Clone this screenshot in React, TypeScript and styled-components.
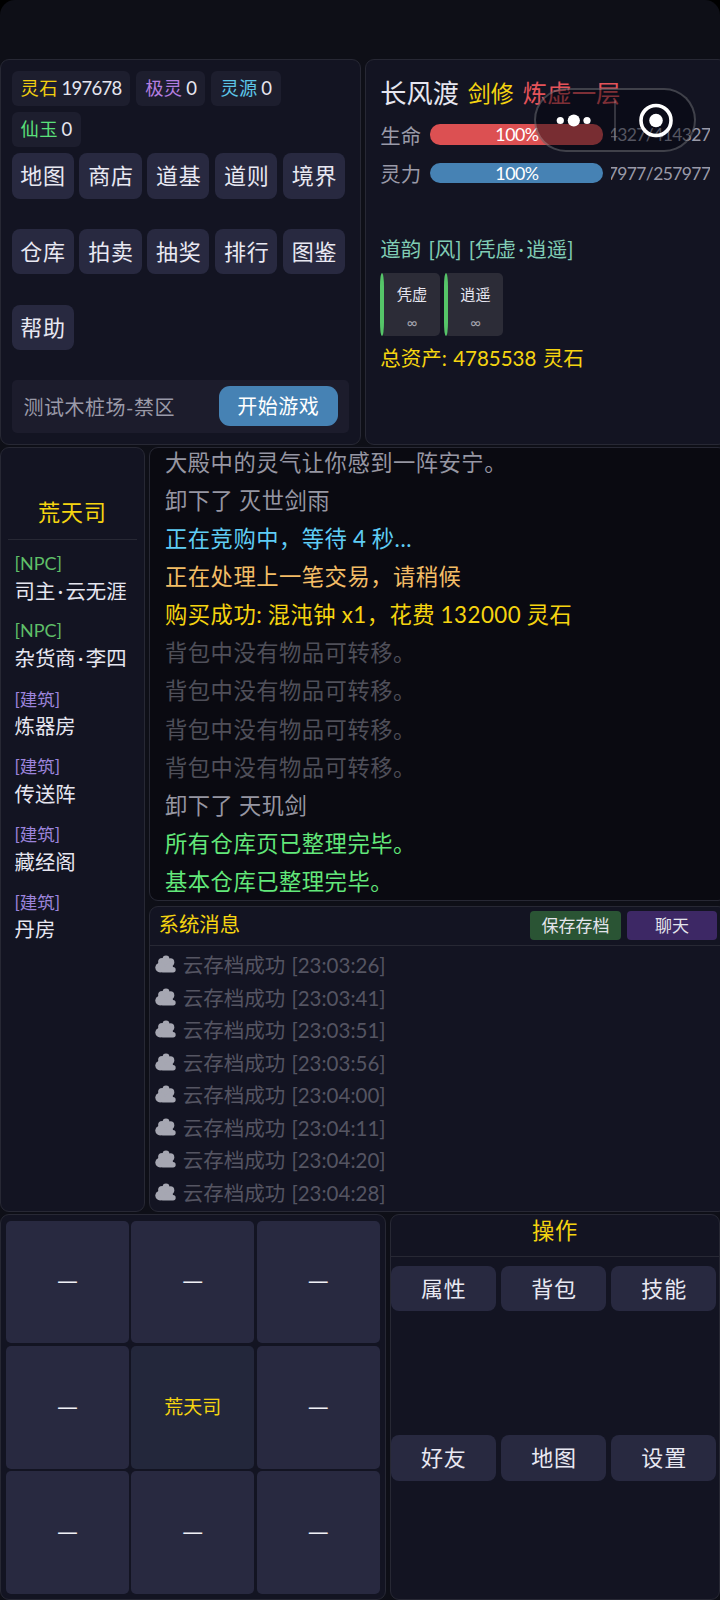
import React from "react";
import styled, { createGlobalStyle } from "styled-components";

const Global = createGlobalStyle`
  *, *::before, *::after { box-sizing: border-box; }
  body { margin: 0; background: #000; }
  button { font: inherit; border: 0; padding: 0; }
`;

const line = "#272834";
const gold = "#f5d410";

const Screen = styled.div`
  position: relative;
  width: 720px;
  height: 1600px;
  overflow: hidden;
  padding-top: 59px;
  display: flex;
  flex-direction: column;
  gap: 2px;
  border-radius: 15px 15px 0 0;
  background: #0e0f17;
  color: #e6e6f0;
  font-family: Lato, "Noto Sans CJK SC", sans-serif;
  font-size: 22.8px;
  font-weight: 400;
  white-space: nowrap;
`;

const Row = styled.div<{ $h: number; $gap: number }>`
  display: flex;
  flex: none;
  height: ${(p) => p.$h}px;
  gap: ${(p) => p.$gap}px;
`;

const Panel = styled.section<{ $w?: number; $h?: number; $dark?: boolean }>`
  flex: none;
  display: flex;
  flex-direction: column;
  ${(p) => p.$w && `width: ${p.$w}px;`}
  ${(p) => p.$h && `height: ${p.$h}px;`}
  border: 1px solid ${line};
  border-radius: 9px;
  background: ${(p) => (p.$dark ? "#0a0a11" : "#131422")};
  overflow: hidden;
`;

const MenuPanel = styled(Panel)`
  padding: 11px 10.5px;
`;

const Chips = styled.div`
  display: grid;
  grid-template-columns: 118.5px 69px 70px;
  gap: 5.7px 6.2px;
`;

const Chip = styled.div`
  width: 100%;
  height: 35.3px;
  padding-left: 9px;
  border-radius: 6px;
  background: #1d1e2e;
  display: flex;
  align-items: center;
  gap: 3.6px;
  font-size: 18.3px;
  letter-spacing: 0.4px;
  line-height: 35px;

  &:nth-child(4) {
    width: 69px;
  }
`;

const ChipName = styled.span<{ $c: string }>`
  color: ${(p) => p.$c};
`;

const ChipNum = styled.span`
  font-size: 18.5px;
  letter-spacing: -0.7px;
`;

const MenuGrid = styled.div`
  display: grid;
  grid-template-columns: repeat(5, 62.2px);
  grid-auto-rows: 45.3px;
  gap: 30.4px 5.7px;
  margin-top: 6px;
`;

const MenuButton = styled.button`
  padding-left: 1px;
  border-radius: 8px;
  background: #282940;
  color: #e8e8f2;
  font-size: 22px;
  letter-spacing: 0.8px;
  line-height: 43px;
  text-align: center;
`;

const StartBar = styled.div`
  margin-top: 29.8px;
  width: 337.5px;
  height: 54px;
  padding: 0 11.5px 0 12px;
  display: flex;
  align-items: center;
  justify-content: space-between;
  border-radius: 5px;
  background: #1c1c2c;
  color: #9a9aa8;
  font-size: 20px;
  letter-spacing: 0.5px;
`;

const StartButton = styled.button`
  width: 118.5px;
  height: 40px;
  border-radius: 11px;
  background: #4682b4;
  color: #fff;
  letter-spacing: 0.5px;
  line-height: 38px;
`;

const HeroPanel = styled(Panel)`
  padding: 12px 0 0 14.3px;
`;

const HeroTitle = styled.div`
  display: flex;
  align-items: center;
  gap: 9px;
  height: 43.5px;
  padding-bottom: 2px;
  font-size: 26.2px;
  line-height: 40px;
`;

const HeroClass = styled.span`
  color: ${gold};
  font-size: 23px;
`;

const HeroRealm = styled.span`
  color: #e5535a;
  font-size: 24.4px;
`;

const Stat = styled.div`
  display: flex;
  align-items: center;
  height: 38.4px;
  color: #9a9aa8;
  font-size: 20.4px;
`;

const Gauge = styled.div<{ $c: string }>`
  width: 173px;
  height: 20.5px;
  margin: 0 7.5px 0 9.4px;
  border-radius: 10px;
  background: ${(p) => p.$c};
  color: #fff;
  text-align: center;
  font-size: 17.8px;
  line-height: 20.5px;
  letter-spacing: -0.5px;
`;

const StatValue = styled.div`
  display: flex;
  justify-content: flex-end;
  width: 99.5px;
  overflow: hidden;
  font-size: 17.5px;
  letter-spacing: -0.6px;
`;

const Rhyme = styled.div`
  margin-top: 40px;
  height: 34px;
  line-height: 34px;
  color: #80ccb4;
  font-size: 20.5px;
  word-spacing: 2px;
`;

const MidDot = styled.span`
  padding: 0 2.4px;
`;

const Buffs = styled.div`
  display: flex;
  gap: 4px;
  margin-top: 7px;
`;

const Buff = styled.div`
  display: flex;
  width: 59.5px;
  height: 62.5px;
  border-radius: 5px;
  background: #2c2c37;
  font-size: 15.2px;
  line-height: 25px;
`;

const BuffEdge = styled.div`
  width: 4px;
  border-radius: 2px / 14px;
  background: #55c568;
`;

const BuffText = styled.div`
  flex: 1;
  padding-top: 8.5px;
  text-align: center;
`;

const BuffTime = styled.div`
  color: #a4a4ae;
  font-size: 14.5px;
  line-height: 31px;
`;

const Assets = styled.div`
  margin-top: 5px;
  height: 34px;
  line-height: 34px;
  color: ${gold};
  font-size: 20.5px;
  word-spacing: 1px;
`;

const Column = styled.div`
  display: flex;
  flex-direction: column;
  gap: 5px;
`;

const PlacePanel = styled(Panel)`
  padding: 45px 7px 0;
`;

const PlaceTitle = styled.h2`
  margin: 0 0 6px;
  height: 46.5px;
  border-bottom: 1px solid ${line};
  color: ${gold};
  font-size: 22.2px;
  letter-spacing: 0.6px;
  font-weight: 400;
  line-height: 40px;
  text-align: center;
`;

const Place = styled.div`
  height: 67.8px;
  padding-left: 6.5px;
  padding-top: 3px;
  font-size: 20.4px;
  line-height: 28px;
`;

const PlaceKind = styled.div<{ $npc: boolean }>`
  color: ${(p) => (p.$npc ? "#5fbf68" : "#9c84dc")};
  font-size: ${(p) => (p.$npc ? 18 : 17.5)}px;
  line-height: 28px;
  padding-top: ${(p) => (p.$npc ? 0 : 1.5)}px;
  height: 28px;
`;

const LogPanel = styled(Panel)`
  padding-left: 15px;
`;

const LogList = styled.div`
  margin-top: -4.4px;
`;

const LogLine = styled.div<{ $c: string }>`
  height: 38.15px;
  line-height: 38.15px;
  font-size: 22.3px;
  letter-spacing: 0.5px;
  word-spacing: -0.7px;
  color: ${(p) => p.$c};
`;

const MessageHead = styled.div`
  flex: none;
  height: 38.5px;
  padding: 0 2.8px 0 8.5px;
  display: flex;
  align-items: center;
  border-bottom: 1px solid ${line};
  color: ${gold};
  font-size: 20.4px;
  line-height: 35px;
`;

const HeadTitle = styled.div`
  flex: 1;
  height: 38px;
`;

const HeadButton = styled.button<{ $c: string }>`
  width: 90.5px;
  height: 29px;
  margin-right: 6px;
  border-radius: 4px;
  background: ${(p) => p.$c};
  color: #e4e4ec;
  font-size: 17px;
  line-height: 27px;
`;

const MessageList = styled.div`
  padding: 2.5px 0 0 5.2px;
`;

const Message = styled.div`
  display: flex;
  align-items: center;
  gap: 6.5px;
  height: 32.5px;
  color: #555562;
  font-size: 20.5px;
  word-spacing: 1px;
`;

const MapPanel = styled(Panel)`
  display: grid;
  grid-template-columns: repeat(3, 122.8px);
  grid-template-rows: repeat(3, 122.8px);
  gap: 2.6px;
  padding: 5.5px 0 0 5px;
`;

const Cell = styled.div<{ $here: boolean }>`
  display: flex;
  align-items: center;
  justify-content: center;
  padding-bottom: ${(p) => (p.$here ? 3 : 5)}px;
  border-radius: 5px;
  background: ${(p) => (p.$here ? "#23273b" : "#282940")};
  color: ${(p) => (p.$here ? gold : "#f0f0f6")};
  font-family: "Noto Sans CJK SC", sans-serif;
  font-size: ${(p) => (p.$here ? 19 : 23.5)}px;
`;

const ActionTitle = styled.h2`
  margin: 0;
  height: 42px;
  border-bottom: 1px solid ${line};
  color: ${gold};
  font-size: 22.3px;
  letter-spacing: 0.5px;
  font-weight: 400;
  line-height: 31px;
  text-align: center;
`;

const ActionGrid = styled.div`
  display: grid;
  grid-template-columns: repeat(3, 104.8px);
  grid-auto-rows: 45.3px;
  gap: 124.2px 5.4px;
  margin-top: 8.8px;
`;

const Capsule = styled.div`
  position: absolute;
  left: 534px;
  top: 87.5px;
  width: 162px;
  height: 64.5px;
  border: 2px solid rgba(255, 255, 255, 0.22);
  border-radius: 33px;
  background: rgba(3, 5, 12, 0.46);
`;

const Cloud = () => (
  <svg width="21" height="18" viewBox="0 0 21 18" fill="#a6a7b2">
    <circle cx="11" cy="3.9" r="3.4" />
    <circle cx="7.2" cy="7" r="4.1" />
    <circle cx="15.3" cy="7.2" r="4" />
    <circle cx="11" cy="9" r="5" />
    <circle cx="5.2" cy="12.6" r="4.9" />
    <circle cx="14" cy="12.4" r="4" />
    <rect x="5" y="12.1" width="15.7" height="5.4" rx="2.7" />
  </svg>
);

const menu = ["地图", "商店", "道基", "道则", "境界", "仓库", "拍卖", "抽奖", "排行", "图鉴", "帮助"];
const chips = [
  ["灵石", "197678", "#f0cf10"],
  ["极灵", "0", "#b57ee0"],
  ["灵源", "0", "#5cc6e8"],
  ["仙玉", "0", "#5be07a"],
];
const places = [
  ["NPC", "司主·云无涯"],
  ["NPC", "杂货商·李四"],
  ["建筑", "炼器房"],
  ["建筑", "传送阵"],
  ["建筑", "藏经阁"],
  ["建筑", "丹房"],
];
const plain = "#9696a2";
const faint = "#4f4f59";
const green = "#62e87a";
const log = [
  ["大殿中的灵气让你感到一阵安宁。", plain],
  ["卸下了 灭世剑雨", plain],
  ["正在竞购中，等待 4 秒...", "#5fcdf5"],
  ["正在处理上一笔交易，请稍候", "#f3bd66"],
  ["购买成功: 混沌钟 x1，花费 132000 灵石", gold],
  ["背包中没有物品可转移。", faint],
  ["背包中没有物品可转移。", faint],
  ["背包中没有物品可转移。", faint],
  ["背包中没有物品可转移。", faint],
  ["卸下了 天玑剑", plain],
  ["所有仓库页已整理完毕。", green],
  ["基本仓库已整理完毕。", green],
];
const times = ["23:03:26", "23:03:41", "23:03:51", "23:03:56", "23:04:00", "23:04:11", "23:04:20", "23:04:28"];
const cells = ["—", "—", "—", "—", "荒天司", "—", "—", "—", "—"];
const actions = ["属性", "背包", "技能", "好友", "地图", "设置"];

const Dotted = ({ text }: { text: string }) => {
  const [head, tail] = text.split("·");
  return (
    <>
      {head}
      {tail && <MidDot>·</MidDot>}
      {tail}
    </>
  );
};

export default function App() {
  return (
    <>
      <Global />
      <Screen>
        <Row $h={386} $gap={4}>
          <MenuPanel $w={361}>
            <Chips>
              {chips.map(([name, num, c]) => (
                <Chip key={name}>
                  <ChipName $c={c}>{name}</ChipName>
                  <ChipNum>{num}</ChipNum>
                </Chip>
              ))}
            </Chips>
            <MenuGrid>
              {menu.map((m) => (
                <MenuButton key={m}>{m}</MenuButton>
              ))}
            </MenuGrid>
            <StartBar>
              测试木桩场-禁区
              <StartButton>开始游戏</StartButton>
            </StartBar>
          </MenuPanel>
          <HeroPanel $w={362}>
            <HeroTitle>
              长风渡
              <HeroClass>剑修</HeroClass>
              <HeroRealm>炼虚一层</HeroRealm>
            </HeroTitle>
            <Stat>
              生命<Gauge $c="#dc5052">100%</Gauge>
              <StatValue>414327/414327</StatValue>
            </Stat>
            <Stat>
              灵力<Gauge $c="#4682b4">100%</Gauge>
              <StatValue>257977/257977</StatValue>
            </Stat>
            <Rhyme>
              <Dotted text="道韵 [风] [凭虚·逍遥]" />
            </Rhyme>
            <Buffs>
              {["凭虚", "逍遥"].map((b) => (
                <Buff key={b}>
                  <BuffEdge />
                  <BuffText>
                    {b}
                    <BuffTime>∞</BuffTime>
                  </BuffText>
                </Buff>
              ))}
            </Buffs>
            <Assets>总资产: 4785538 灵石</Assets>
          </HeroPanel>
        </Row>
        <Row $h={765} $gap={4.5}>
          <PlacePanel $w={144.5}>
            <PlaceTitle>荒天司</PlaceTitle>
            {places.map(([kind, name]) => (
              <Place key={name}>
                <PlaceKind $npc={kind === "NPC"}>[{kind}]</PlaceKind>
                <Dotted text={name} />
              </Place>
            ))}
          </PlacePanel>
          <Column>
            <LogPanel $w={578} $h={454} $dark>
              <LogList>
                {log.map(([text, c], i) => (
                  <LogLine key={i} $c={c}>
                    {text}
                  </LogLine>
                ))}
              </LogList>
            </LogPanel>
            <Panel $w={578} $h={306}>
              <MessageHead>
                <HeadTitle>系统消息</HeadTitle>
                <HeadButton $c="#2a5434">保存存档</HeadButton>
                <HeadButton $c="#3d2865">聊天</HeadButton>
              </MessageHead>
              <MessageList>
                {times.map((t) => (
                  <Message key={t}>
                    <Cloud />
                    云存档成功 [{t}]
                  </Message>
                ))}
              </MessageList>
            </Panel>
          </Column>
        </Row>
        <Row $h={386} $gap={4.4}>
          <MapPanel $w={385.5}>
            {cells.map((c, i) => (
              <Cell key={i} $here={i === 4}>
                {c}
              </Cell>
            ))}
          </MapPanel>
          <Panel $w={330}>
            <ActionTitle>操作</ActionTitle>
            <ActionGrid>
              {actions.map((a, i) => (
                <MenuButton key={i}>{a}</MenuButton>
              ))}
            </ActionGrid>
          </Panel>
        </Row>
        <Capsule>
          <svg width="158" height="60" viewBox="536 89.5 158 60" fill="#fff">
            <circle cx="560.3" cy="120" r="3.6" />
            <circle cx="573.8" cy="120" r="6.1" />
            <circle cx="587" cy="120" r="3.6" />
            <path d="M615 100v40" stroke="#fff" strokeOpacity=".22" strokeWidth="1.6" />
            <circle cx="656" cy="120" r="15" fill="none" stroke="#fff" strokeWidth="3.6" />
            <circle cx="656" cy="120" r="6.8" />
          </svg>
        </Capsule>
      </Screen>
    </>
  );
}
